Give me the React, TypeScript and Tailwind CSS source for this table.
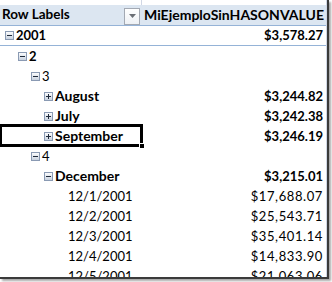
import React from "react";

type Row = {
  label: string;
  level: number;
  box?: "minus" | "plus";
  bold?: boolean;
  value?: string;
  line?: boolean;
  selected?: boolean;
};

const rows: Row[] = [
  { label: "2001", level: 0, box: "minus", bold: true, value: "$3,578.27", line: true },
  { label: "2", level: 1, box: "minus", bold: true },
  { label: "3", level: 2, box: "minus" },
  { label: "August", level: 3, box: "plus", bold: true, value: "$3,244.82" },
  { label: "July", level: 3, box: "plus", bold: true, value: "$3,242.38" },
  { label: "September", level: 3, box: "plus", bold: true, value: "$3,246.19", selected: true },
  { label: "4", level: 2, box: "minus" },
  { label: "December", level: 3, box: "minus", bold: true, value: "$3,215.01" },
  { label: "12/1/2001", level: 4, value: "$17,688.07" },
  { label: "12/2/2001", level: 4, value: "$25,543.71" },
  { label: "12/3/2001", level: 4, value: "$35,401.14" },
  { label: "12/4/2001", level: 4, value: "$14,833.90" },
  { label: "12/5/2001", level: 4, value: "$21,063.06" },
];

const indent = ["pl-[5px]", "pl-[18px]", "pl-[31px]", "pl-[44px]", "pl-[68px]"];

const isNumeric = (s: string) => /^[\d/]+$/.test(s);

const ToggleBox = ({ kind }: { kind: "minus" | "plus" }) => (
  <svg width="9" height="9" viewBox="0 0 9 9" className="shrink-0">
    <defs>
      <linearGradient id={`g-${kind}`} x1="0" y1="0" x2="0" y2="1">
        <stop offset="0" stopColor="#ffffff" />
        <stop offset="1" stopColor="#c5cfdd" />
      </linearGradient>
    </defs>
    <rect x="0.5" y="0.5" width="8" height="8" fill={`url(#g-${kind})`} stroke="#8a9ab3" />
    <rect x="2" y="4" width="5" height="1" fill="#1f2a3a" />
    {kind === "plus" && <rect x="4" y="2" width="1" height="5" fill="#1f2a3a" />}
  </svg>
);

const DropButton = () => (
  <div className="w-[16px] h-[17px] mr-[2px] mt-[2px] border border-[#a3a9b3] bg-gradient-to-b from-white to-[#eef1f5] flex items-center justify-center">
    <svg width="7" height="4" viewBox="0 0 7 4">
      <path d="M0 0h7L3.5 4z" fill="#6b6f75" />
    </svg>
  </div>
);

export default function App() {
  return (
    <div className="w-[332px] h-[282px] bg-white overflow-hidden" style={{ fontFamily: "Lato, 'Liberation Sans', sans-serif" }}>
      <div className="w-[329px] h-[279px] border-r-2 border-b-2 border-[#3a3a3a] shadow-[2px_2px_2px_rgba(0,0,0,0.35)]">
        <div className="w-[327px] h-[277px] overflow-hidden border-r border-[#d0d7e5] text-black leading-none">
          {/* sliver of the row above */}
          <div className="h-[5px] w-[142px] border-r border-[#d0d7e5]" />

          {/* header */}
          <div className="h-[21px] flex bg-[#dce6f1] border-b border-[#95b3d7] font-bold text-[14px]">
            <div className="w-[142px] flex items-center justify-between pl-[2px]">
              <span className="text-[13.5px]">Row Labels</span>
              <DropButton />
            </div>
            <div className="flex-1 flex items-center pl-[2px]">MiEjemploSinHASONVALUE</div>
          </div>

          {rows.map((r) => (
            <div
              key={r.label}
              className={`relative h-[20px] flex ${r.line ? "border-b border-[#95b3d7]" : ""}`}
            >
              <div
                className={`w-[142px] flex items-center gap-[2px] ${indent[r.level]} ${r.bold ? "font-bold" : ""} ${
                  isNumeric(r.label) ? "text-[13px]" : "text-[14px]"
                }`}
              >
                {r.box && <ToggleBox kind={r.box} />}
                <span>{r.label}</span>
              </div>
              <div
                className={`flex-1 flex items-center justify-end pr-[3px] text-[13px] ${
                  r.bold ? "font-bold" : "tracking-[0.6px]"
                }`}
              >
                {r.value}
              </div>
              {r.selected && (
                <div className="absolute left-[-1px] top-[-2px] w-[144px] h-[23px] border-[3px] border-black">
                  <div className="absolute right-[-5px] bottom-[-5px] w-[6px] h-[6px] bg-black border border-white" />
                </div>
              )}
            </div>
          ))}
        </div>
      </div>
    </div>
  );
}
